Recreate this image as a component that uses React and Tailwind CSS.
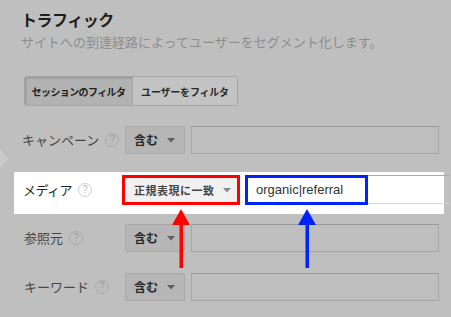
import React from "react";

const jp = { fontFamily: '"Noto Sans CJK JP", "Noto Sans", sans-serif' };

function Help({ light, ml = "ml-[6px]" }) {
  return (
    <span
      className={`${ml} inline-flex h-[14px] w-[14px] shrink-0 items-center justify-center rounded-full border text-[10px] leading-none ${
        light ? "border-[#cfcfcf] text-[#bdbdbd] bg-white" : "border-[#a9a9a9] text-[#9a9a9a]"
      }`}
      style={{ fontFamily: '"Liberation Sans", Arial, sans-serif' }}
    >
      ?
    </span>
  );
}

function Caret({ color }) {
  return (
    <svg width="8" height="5" viewBox="0 0 8 5" className="shrink-0">
      <path d="M0 0 L8 0 L4 4.5 Z" fill={color} />
    </svg>
  );
}

function GrayRow({ label, pl = "pl-[24px]" }) {
  return (
    <div className="flex h-[28px] items-center">
      <div className={`flex w-[125px] shrink-0 items-center ${pl}`}>
        <span className="text-[13px] text-[#474747] whitespace-nowrap" style={jp}>
          {label}
        </span>
        <Help />
      </div>
      <div className="flex h-[28px] w-[60px] shrink-0 items-center justify-between rounded-[2px] border border-[#a9a9a9] bg-[#b6b6b6] pl-[8px] pr-[9px]">
        <span className="text-[12px] font-bold text-[#2a2a2a]" style={jp}>
          含む
        </span>
        <Caret color="#5f5f5f" />
      </div>
      <div className="ml-[6px] h-[28px] w-[248px] shrink-0 border border-[#a6a6a6] border-t-[#999] bg-[#bfbfbf]" />
    </div>
  );
}

export default function App() {
  return (
    <div className="relative h-[317px] w-[451px] overflow-hidden bg-[#bfbfbf]">
      <div className="flex flex-col">
        <div
          className="ml-[21px] mt-[9px] text-[16px] leading-[20px] font-bold tracking-[-0.5px] text-[#1e1e1e]"
          style={jp}
        >
          トラフィック
        </div>
        <div className="ml-[21px] mt-[4px] text-[13px] leading-[18px] text-[#8e8e8e]" style={jp}>
          サイトへの到達経路によってユーザーをセグメント化します。
        </div>

        <div className="ml-[24px] mt-[25px] flex h-[30px] w-[214px] overflow-hidden rounded-[3px] border border-[#a7a7a7]">
          <div
            className="flex w-[107px] shrink-0 items-center justify-center whitespace-nowrap bg-[#b2b2b2] text-[10px] font-bold tracking-[-0.6px] text-[#1f1f1f] shadow-[inset_1px_1px_2px_rgba(0,0,0,0.2)]"
            style={jp}
          >
            セッションのフィルタ
          </div>
          <div
            className="flex flex-1 items-center justify-center whitespace-nowrap border-l border-[#a7a7a7] bg-[#c3c3c3] text-[10px] font-bold tracking-[-0.2px] text-[#2a2a2a]"
            style={jp}
          >
            ユーザーをフィルタ
          </div>
        </div>

        <div className="mt-[20px]">
          <GrayRow label="キャンペーン" pl="pl-[22px]" />
        </div>

        <div className="ml-[14px] mt-[18px] flex h-[42px] w-[430px] bg-white pt-[3px]">
          <div className="flex h-[30px] w-[108px] shrink-0 items-center pl-[9px]">
            <span className="text-[13px] tracking-[-0.5px] text-[#222]" style={jp}>
              メディア
            </span>
            <Help light ml="ml-[6px]" />
          </div>
          <div className="flex h-[30px] w-[118px] shrink-0 items-center justify-between border-[3px] border-[#ff0000] bg-[#f1f1f1] pl-[9px] pr-[6px]">
            <span className="text-[11px] font-bold tracking-[0.5px] text-[#444]" style={jp}>
              正規表現に一致
            </span>
            <Caret color="#8a8a8a" />
          </div>
          <div className="ml-[5px] flex h-[30px] shrink-0">
            <div className="flex h-[30px] w-[123px] shrink-0 items-center border-[3px] border-[#0022ff] bg-white pl-[8px]">
              <span
                className="text-[13px] text-[#333]"
                style={{ fontFamily: '"Liberation Sans", Arial, sans-serif' }}
              >
                organic|referral
              </span>
            </div>
            <div className="h-[29px] w-[81px] shrink-0 border-t border-b border-t-[#ababab] border-b-[#d8d8d8]" />
          </div>
        </div>

        <div className="mt-[10px]">
          <GrayRow label="参照元" />
        </div>
        <div className="mt-[21px]">
          <GrayRow label="キーワード" />
        </div>
      </div>

      {/* left chevron */}
      <svg className="absolute left-0 top-[150px]" width="9" height="18" viewBox="0 0 9 18">
        <path d="M0 1 L7.5 9 L0 17 Z" fill="#c9c9c9" stroke="#cfcfcf" strokeWidth="1" />
      </svg>

      {/* red arrow */}
      <svg className="absolute left-[170px] top-[208px]" width="22" height="62" viewBox="0 0 22 62">
        <path d="M11 1 L2 17 L20 17 Z" fill="#ff0000" />
        <rect x="9.5" y="16" width="3.5" height="44" fill="#ff0000" />
      </svg>

      {/* blue arrow */}
      <svg className="absolute left-[296px] top-[208px]" width="22" height="62" viewBox="0 0 22 62">
        <path d="M11 1 L2 17 L20 17 Z" fill="#0022ff" />
        <rect x="9.5" y="16" width="3.5" height="44" fill="#0022ff" />
      </svg>
    </div>
  );
}
